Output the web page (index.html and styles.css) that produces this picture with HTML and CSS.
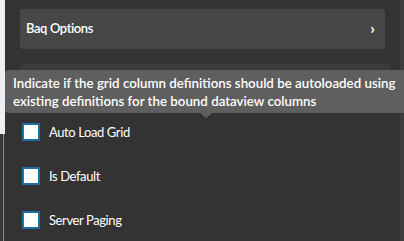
FILE: index.html
```html
<!DOCTYPE html>
<html lang="en">
<head>
    <meta charset="UTF-8">
    <title>Grid Properties</title>
    <link rel="stylesheet" href="styles.css">
</head>
<body>
    <div class="wrapper">
        <div class="sideStrip">
            <div class="sideTop"></div>
            <div class="sideBottom"></div>
        </div>
        <div class="panel">
            <div class="card">
                <span class="cardTitle">Baq Options</span>
                <span class="chevron">&#x203A;</span>
            </div>
            <div class="card hidden"></div>
            <div class="options">
                <label class="option"><span class="box"></span>Auto Load Grid</label>
                <label class="option"><span class="box"></span>Is Default</label>
                <label class="option"><span class="box"></span>Server Paging</label>
            </div>
        </div>
        <div class="scrollStrip"></div>
        <div class="tooltip">
            Indicate if the grid column definitions should be autoloaded using<br>
            existing definitions for the bound dataview columns
        </div>
    </div>
</body>
</html>
```

FILE: styles.css
```css
body {
    margin: 0;
    background-color: #333333;
    font-family: 'Lato', 'Open Sans', sans-serif;
}
.wrapper {
    position: relative;
    display: flex;
    height: 241px;
    overflow: hidden;
}
.sideStrip {
    width: 5px;
    display: flex;
    flex-direction: column;
}
.sideTop {
    height: 134px;
    background: #eef1f4;
}
.sideBottom {
    flex: 1;
    background: #3a3a3a;
    border-left: 3px solid #3a3a3a;
    box-shadow: inset 1px 0 0 #8a8a8a;
}
.panel {
    flex: 1;
    background: #333333;
    padding: 9px 10px 0 15px;
}
.scrollStrip {
    width: 4px;
    background: #3d3d3d;
}
.card {
    height: 40px;
    margin-right: 5px;
    background: #474747;
    border-radius: 3px;
    display: flex;
    align-items: center;
    justify-content: space-between;
    padding: 0 10px 0 6px;
    color: #ffffff;
    font-size: 13px;
}
.cardTitle {
    font-weight: 600;
    letter-spacing: -0.4px;
    margin-top: -2px;
}
.chevron {
    font-size: 16px;
    font-weight: bold;
    margin-top: -3px;
}
.card.hidden {
    margin-top: 15px;
    margin-right: 0;
    background: #3b3b3b;
}
.options {
    margin-top: 6px;
    display: flex;
    flex-direction: column;
}
.option {
    display: flex;
    align-items: center;
    height: 44px;
    padding-left: 2px;
    color: #ffffff;
    font-size: 13px;
    letter-spacing: -0.4px;
}
.option .box + * {
    margin-top: 2px;
}
.box {
    width: 14px;
    height: 14px;
    border: 2px solid #1d6fa5;
    border-radius: 1px;
    background: #ffffff;
    margin-right: 9px;
}
.tooltip {
    position: absolute;
    left: 5px;
    top: 70px;
    width: 404px;
    height: 43px;
    padding: 4px 0 0 8px;
    box-sizing: border-box;
    background: #5f5f5f;
    border-radius: 4px;
    color: #ffffff;
    font-size: 13.3px;
    font-weight: 600;
    line-height: 18px;
    white-space: nowrap;
}
.tooltip::after {
    content: "";
    position: absolute;
    left: 195px;
    bottom: -5px;
    border-left: 6px solid transparent;
    border-right: 6px solid transparent;
    border-top: 5px solid #5f5f5f;
}
```
